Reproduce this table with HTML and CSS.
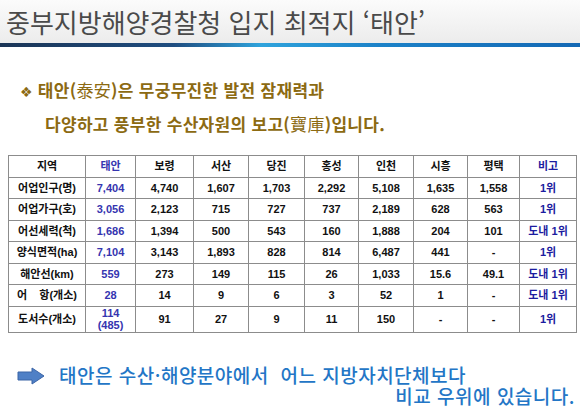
FILE: index.html
```html
<!DOCTYPE html>
<html lang="ko">
<head>
    <meta charset="UTF-8">
    <meta name="viewport" content="width=device-width, initial-scale=1.0">
    <title>중부지방해양경찰청 입지 최적지 '태안'</title>
    <link rel="stylesheet" href="styles.css">
</head>
<body>
    <header class="title-bar">
        <h1>중부지방해양경찰청 입지 최적지 ‘태안’</h1>
    </header>
    <div class="rule"></div>

    <section class="lead">
        <p class="lead-line"><span class="bullet">❖</span>태안(<span class="hanja">泰安</span>)은 무궁무진한 발전 잠재력과</p>
        <p class="lead-line indent">다양하고 풍부한 수산자원의 보고(<span class="hanja">寶庫</span>)입니다.</p>
    </section>

    <table class="stats">
        <colgroup>
            <col style="width:77px">
            <col style="width:50px">
            <col style="width:58px">
            <col style="width:55px">
            <col style="width:56px">
            <col style="width:54px">
            <col style="width:55px">
            <col style="width:54px">
            <col style="width:52px">
            <col style="width:57px">
        </colgroup>
        <tr>
            <th>지역</th><th class="taean">태안</th><th>보령</th><th>서산</th><th>당진</th>
            <th>홍성</th><th>인천</th><th>시흥</th><th>평택</th><th class="note">비고</th>
        </tr>
        <tr>
            <td>어업인구(명)</td><td class="taean">7,404</td><td>4,740</td><td>1,607</td><td>1,703</td>
            <td>2,292</td><td>5,108</td><td>1,635</td><td>1,558</td><td class="note">1위</td>
        </tr>
        <tr>
            <td>어업가구(호)</td><td class="taean">3,056</td><td>2,123</td><td>715</td><td>727</td>
            <td>737</td><td>2,189</td><td>628</td><td>563</td><td class="note">1위</td>
        </tr>
        <tr>
            <td>어선세력(척)</td><td class="taean">1,686</td><td>1,394</td><td>500</td><td>543</td>
            <td>160</td><td>1,888</td><td>204</td><td>101</td><td class="note">도내 1위</td>
        </tr>
        <tr>
            <td>양식면적(ha)</td><td class="taean">7,104</td><td>3,143</td><td>1,893</td><td>828</td>
            <td>814</td><td>6,487</td><td>441</td><td>-</td><td class="note">1위</td>
        </tr>
        <tr>
            <td>해안선(km)</td><td class="taean">559</td><td>273</td><td>149</td><td>115</td>
            <td>26</td><td>1,033</td><td>15.6</td><td>49.1</td><td class="note">도내 1위</td>
        </tr>
        <tr>
            <td>어&nbsp;&nbsp;&nbsp;&nbsp;항(개소)</td><td class="taean">28</td><td>14</td><td>9</td><td>6</td>
            <td>3</td><td>52</td><td>1</td><td>-</td><td class="note">도내 1위</td>
        </tr>
        <tr class="tall">
            <td>도서수(개소)</td><td class="taean">114<br>(485)</td><td>91</td><td>27</td><td>9</td>
            <td>11</td><td>150</td><td>-</td><td>-</td><td class="note">1위</td>
        </tr>
    </table>

    <section class="conclusion">
        <svg class="arrow" width="28" height="18" viewBox="0 0 28 18">
            <path d="M1 5 H15 V1 L27 9 L15 17 V13 H1 Z" fill="#4f80c6" stroke="#3b64a6" stroke-width="1"/>
        </svg>
        <div class="conclusion-text">
            <p>태안은 수산·해양분야에서&nbsp;&nbsp;어느 지방자치단체보다</p>
            <p class="right">비교 우위에 있습니다.</p>
        </div>
    </section>
</body>
</html>
```

FILE: styles.css
```css
* {
    margin: 0;
    padding: 0;
    box-sizing: border-box;
}

body {
    width: 580px;
    height: 410px;
    background: #fff;
    font-family: "Noto Sans CJK KR", sans-serif;
    overflow: hidden;
}

.title-bar {
    height: 43px;
    background: linear-gradient(#fbfbfb, #ececec);
    padding-left: 6px;
}

.title-bar h1 {
    font-size: 26px;
    font-weight: 400;
    line-height: 43px;
    letter-spacing: 0;
    color: #4a4a4a;
}

.rule {
    height: 4px;
    background: linear-gradient(90deg, #1b3556 0%, #1f4d80 30%, #2fa3dc 45%, #1c82c8 65%, #1468b4 100%);
}

.lead {
    padding-top: 27px;
    height: 108px;
    color: #8c6a12;
}

.lead-line {
    font-size: 17px;
    font-weight: 700;
    line-height: 31px;
    padding-left: 20px;
    letter-spacing: 0.3px;
}

.lead-line.indent {
    padding-left: 45px;
}

.bullet {
    font-family: "DejaVu Sans", sans-serif;
    font-size: 14px;
    margin-right: 5px;
}

.hanja {
    font-weight: 400;
}

.stats {
    margin-left: 8px;
    width: 568px;
    border-collapse: collapse;
    table-layout: fixed;
    font-family: "Liberation Sans", "Noto Sans CJK KR", sans-serif;
    font-size: 11px;
    font-weight: 700;
    color: #111;
}

.stats th,
.stats td {
    border: 1px solid #8c8c8c;
    height: 21.5px;
    text-align: center;
    font-weight: 700;
    line-height: 12px;
    white-space: nowrap;
}

.stats tr.tall td {
    height: 26px;
}

.stats .taean {
    color: #3535b0;
}

.stats .note {
    color: #1c1ca0;
}

.conclusion {
    display: flex;
    align-items: flex-start;
    padding: 31px 5px 0 17px;
    color: #2376c6;
}

.arrow {
    margin-top: 3px;
    margin-right: 14px;
    flex: none;
}

.conclusion-text {
    flex: 1;
    font-size: 19px;
    font-weight: 500;
    line-height: 21px;
    letter-spacing: 0.5px;
}

.conclusion-text .right {
    text-align: right;
}
```
